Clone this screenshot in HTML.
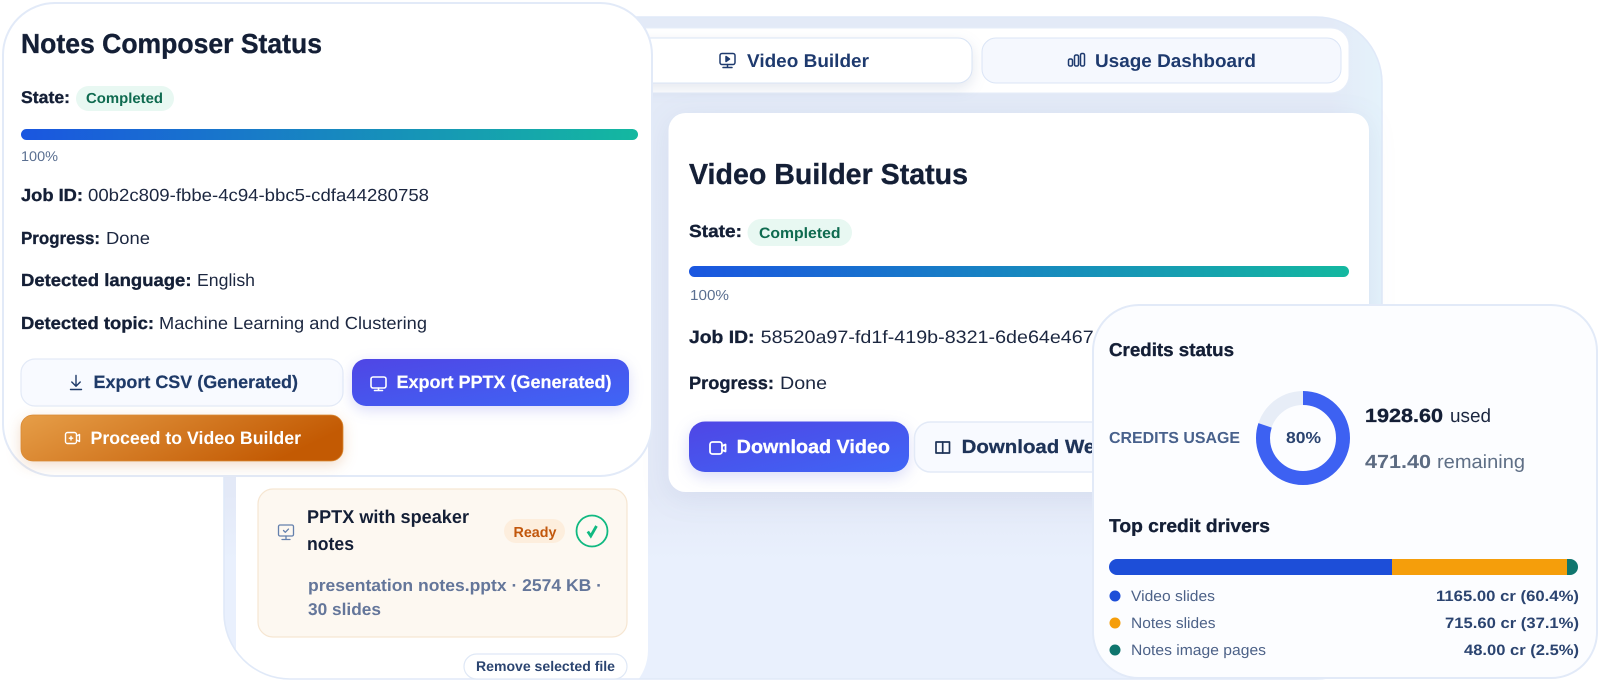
<!DOCTYPE html>
<html lang="en"><head><meta charset="utf-8"><title>Status</title>
<style>
html,body{margin:0;padding:0;background:#fff;width:1600px;height:681px;overflow:hidden}
svg{display:block}
text{font-family:"Liberation Sans",Arial,sans-serif;text-rendering:geometricPrecision;white-space:pre}
.b{font-weight:700}
.dk{fill:#141f36}
.hv{stroke:#141f36;stroke-width:.35}
.i{fill:none;stroke-linecap:round;stroke-linejoin:round}
</style></head><body>
<svg xmlns="http://www.w3.org/2000/svg" width="1600" height="681" viewBox="0 0 1600 681">
<defs>
<linearGradient id="pb" x1="0" x2="1" y1="0" y2="0"><stop offset="0" stop-color="#1a56e0"/><stop offset="1" stop-color="#14b8a0"/></linearGradient>
<linearGradient id="ind" x1="0" x2="1" y1="0" y2="1"><stop offset="0" stop-color="#4f46e5"/><stop offset="1" stop-color="#3f66f6"/></linearGradient>
<linearGradient id="org" x1="0" x2="1" y1="0" y2="0.3"><stop offset="0" stop-color="#e69e48"/><stop offset="1" stop-color="#c35a03"/></linearGradient>
<linearGradient id="pan" x1="0" x2="0" y1="0" y2="1"><stop offset="0" stop-color="#e3eaf7"/><stop offset=".72" stop-color="#e3e9f7"/><stop offset=".82" stop-color="#e9f0fd"/><stop offset="1" stop-color="#e9f0fd"/></linearGradient>
<linearGradient id="tr" x1="0" x2="1" y1="0" y2="0"><stop offset="0" stop-color="#e4f2fb" stop-opacity="0"/><stop offset="1" stop-color="#e4f2fb"/></linearGradient>
<clipPath id="pc"><rect x="224" y="17" width="1158" height="662" rx="66"/></clipPath>
</defs>

<!-- main panel -->
<rect x="224" y="17" width="1158" height="662" rx="66" fill="url(#pan)"/>
<g clip-path="url(#pc)">
<rect x="1330" y="17" width="52" height="330" fill="url(#tr)"/>
<rect x="236" y="60" width="412" height="640" rx="50" fill="#fff"/>
</g>
<rect x="224" y="17" width="1158" height="662" rx="66" fill="none" stroke="#e0e9f8" stroke-width="1.600"/>

<!-- tab strip -->
<rect x="600" y="28" width="749" height="65" rx="18" fill="#fff" stroke="#e6edf9"/>
<rect x="600" y="38" width="372" height="45" rx="14" fill="#fff" stroke="#d9e4f5" style="filter:drop-shadow(0 5px 7px rgba(40,70,130,.13))"/>
<rect x="982" y="38" width="359" height="45" rx="14" fill="#f5f8fe" stroke="#dbe5f6"/>
<g class="i" stroke="#1e3a6e" stroke-width="1.500">
<rect x="720" y="53.500" width="15" height="11" rx="2"/><path d="M727.500 64.500v3M723 67.500h9"/><path d="M726 56.500v5l3.500-2.500z" fill="#1e3a6e"/>
<rect x="1068.500" y="59" width="4" height="7" rx="1.500"/><rect x="1074.500" y="55" width="4" height="11" rx="1.500"/><rect x="1080.500" y="53.500" width="4" height="12.500" rx="1.500"/>
</g>
<text x="747" y="67" font-size="18.500" class="b" fill="#1e3a6e" textLength="122" lengthAdjust="spacingAndGlyphs">Video Builder</text>
<text x="1095" y="67" font-size="18.500" class="b" fill="#1e3a6e" textLength="161" lengthAdjust="spacingAndGlyphs">Usage Dashboard</text>

<!-- video builder card -->
<rect x="668.500" y="113" width="700.500" height="379" rx="17" fill="#fff" style="filter:drop-shadow(0 6px 14px rgba(60,90,150,.08))"/>
<text x="689" y="184" font-size="29" class="b dk hv" textLength="279" lengthAdjust="spacingAndGlyphs">Video Builder Status</text>
<text x="689" y="237" font-size="17.500" class="b dk hv" textLength="53" lengthAdjust="spacingAndGlyphs">State:</text>
<rect x="747.500" y="219" width="104.500" height="27" rx="13.500" fill="#e8f8f2"/>
<text x="759" y="238" font-size="15" class="b" fill="#0f6b50" textLength="81.500" lengthAdjust="spacingAndGlyphs">Completed</text>
<rect x="689" y="266" width="660" height="11" rx="5.500" fill="url(#pb)"/>
<text x="690" y="300" font-size="14.500" fill="#5a6f91" textLength="39" lengthAdjust="spacingAndGlyphs">100%</text>
<text x="689" y="343" font-size="18" class="b dk hv" textLength="65.500" lengthAdjust="spacingAndGlyphs">Job ID:</text>
<text x="760.700" y="343" font-size="18" fill="#1c2740" textLength="333" lengthAdjust="spacingAndGlyphs">58520a97-fd1f-419b-8321-6de64e467</text>
<text x="689" y="389" font-size="18" class="b dk hv" textLength="85" lengthAdjust="spacingAndGlyphs">Progress:</text>
<text x="780" y="389" font-size="18" fill="#1c2740" textLength="47" lengthAdjust="spacingAndGlyphs">Done</text>
<rect x="689" y="421.500" width="220" height="50.500" rx="16" fill="url(#ind)" style="filter:drop-shadow(0 5px 8px rgba(70,80,220,.2))"/>
<g class="i" stroke="#fff" stroke-width="1.800"><rect x="710" y="442" width="12" height="12" rx="2.500"/><path d="M722 446l3.500-1.500v7l-3.500-1.500"/></g>
<text x="736.700" y="453" font-size="19" class="b" fill="#fff" stroke="#fff" stroke-width=".3" textLength="153.300" lengthAdjust="spacingAndGlyphs">Download Video</text>
<rect x="914.500" y="422" width="220" height="50" rx="16" fill="#f8faff" stroke="#e3eaf7" stroke-width="1.500"/>
<g class="i" stroke="#1e3358" stroke-width="1.700"><rect x="936" y="442" width="13.500" height="11"/><path d="M942.700 442v11"/></g>
<text x="961.700" y="453" font-size="19" class="b" fill="#1e3358" stroke="#1e3358" stroke-width=".3" textLength="146" lengthAdjust="spacingAndGlyphs">Download Web</text>

<!-- ready card -->
<rect x="258" y="489" width="369" height="148" rx="15" fill="#fdf8f1" stroke="#f6e6d2" stroke-width="1.200"/>
<g class="i" stroke="#6480ad" stroke-width="1.300"><rect x="278.500" y="525" width="15" height="11" rx="1.500"/><path d="M286 536v3.500M282 539.500h8M283.500 530.500l1.800 1.800 3.200-3.200"/></g>
<text x="307" y="523" font-size="18.500" class="b dk" textLength="162" lengthAdjust="spacingAndGlyphs">PPTX with speaker</text>
<text x="307" y="550" font-size="18.500" class="b dk" textLength="47" lengthAdjust="spacingAndGlyphs">notes</text>
<rect x="504" y="519" width="61" height="24" rx="12" fill="#fdeedd"/>
<text x="513.500" y="537" font-size="14.500" class="b" fill="#c2570c" textLength="43" lengthAdjust="spacingAndGlyphs">Ready</text>
<circle cx="592" cy="531" r="15.500" fill="none" stroke="#10b981" stroke-width="1.800"/>
<path d="M587.800 531.500l3 4.500 5.700-10" fill="none" stroke="#10b981" stroke-width="2.800"/>
<text x="308" y="591" font-size="17" class="b" fill="#64769a" textLength="294" lengthAdjust="spacingAndGlyphs">presentation notes.pptx · 2574 KB ·</text>
<text x="308" y="615" font-size="17" class="b" fill="#64769a" textLength="73" lengthAdjust="spacingAndGlyphs">30 slides</text>
<rect x="464" y="654" width="163" height="25" rx="12.500" fill="#fff" stroke="#dfe8f6" stroke-width="1.200"/>
<text x="476" y="671" font-size="14" class="b" fill="#2b4470" textLength="139" lengthAdjust="spacingAndGlyphs">Remove selected file</text>

<!-- notes card -->
<rect x="3" y="3" width="649" height="473" rx="52" fill="#fff" stroke="#e2eaf8" stroke-width="2"/>
<text x="21" y="53" font-size="27.500" class="b dk hv" textLength="301" lengthAdjust="spacingAndGlyphs">Notes Composer Status</text>
<text x="21" y="103" font-size="17" class="b dk hv" textLength="49" lengthAdjust="spacingAndGlyphs">State:</text>
<rect x="76" y="86" width="98" height="25" rx="12.500" fill="#e8f8f2"/>
<text x="86" y="103" font-size="14.500" class="b" fill="#0f6b50" textLength="77" lengthAdjust="spacingAndGlyphs">Completed</text>
<rect x="21" y="129" width="617" height="11" rx="5.500" fill="url(#pb)"/>
<text x="21" y="161" font-size="14" fill="#5a6f91" textLength="37" lengthAdjust="spacingAndGlyphs">100%</text>
<text x="21" y="201" font-size="17.500" class="b dk hv" textLength="62" lengthAdjust="spacingAndGlyphs">Job ID:</text>
<text x="88" y="201" font-size="17.500" fill="#1c2740" textLength="341" lengthAdjust="spacingAndGlyphs">00b2c809-fbbe-4c94-bbc5-cdfa44280758</text>
<text x="21" y="244" font-size="17.500" class="b dk hv" textLength="79" lengthAdjust="spacingAndGlyphs">Progress:</text>
<text x="106" y="244" font-size="17.500" fill="#1c2740" textLength="44" lengthAdjust="spacingAndGlyphs">Done</text>
<text x="21" y="286" font-size="17.500" class="b dk hv" textLength="170.500" lengthAdjust="spacingAndGlyphs">Detected language:</text>
<text x="197" y="286" font-size="17.500" fill="#1c2740" textLength="58" lengthAdjust="spacingAndGlyphs">English</text>
<text x="21" y="329" font-size="17.500" class="b dk hv" textLength="133" lengthAdjust="spacingAndGlyphs">Detected topic:</text>
<text x="159" y="329" font-size="17.500" fill="#1c2740" textLength="268" lengthAdjust="spacingAndGlyphs">Machine Learning and Clustering</text>

<rect x="21" y="359" width="322" height="47" rx="14" fill="#f8faff" stroke="#e3eaf7" stroke-width="1.200"/>
<path class="i" d="M76 375.500v10.500M71.800 382l4.200 4.200 4.200-4.200M70.500 389.500h11" stroke="#1f3a68" stroke-width="1.400"/>
<text x="93.500" y="388" font-size="18" class="b" fill="#1f3a68" stroke="#1f3a68" stroke-width=".2" textLength="204.500" lengthAdjust="spacingAndGlyphs">Export CSV (Generated)</text>
<rect x="352" y="359" width="277" height="47" rx="14" fill="url(#ind)" style="filter:drop-shadow(0 4px 7px rgba(70,80,220,.2))"/>
<g class="i" stroke="#fff" stroke-width="1.600"><rect x="371" y="377" width="15" height="11" rx="2"/><path d="M378.500 388v2.500M374.500 390.500h8"/></g>
<text x="396.500" y="388" font-size="18" class="b" fill="#fff" stroke="#fff" stroke-width=".2" textLength="215" lengthAdjust="spacingAndGlyphs">Export PPTX (Generated)</text>
<rect x="21" y="415" width="322" height="46" rx="12" fill="url(#org)" stroke="#d98a35" stroke-width=".8" style="filter:drop-shadow(0 4px 7px rgba(195,100,20,.22))"/>
<g class="i" stroke="#fff" stroke-width="1.400"><rect x="65.500" y="432.500" width="11" height="11" rx="2"/><path d="M76.500 436l3-1.500v7l-3-1.500M71 436.500v3.500M69.300 438.200h3.400"/></g>
<text x="90.500" y="444" font-size="18" class="b" fill="#fff" textLength="210.500" lengthAdjust="spacingAndGlyphs">Proceed to Video Builder</text>

<!-- credits card -->
<rect x="1093" y="305" width="504" height="373" rx="46" fill="#fcfdff" stroke="#e2eaf8" stroke-width="2"/>
<text x="1109" y="356" font-size="18.500" class="b dk hv" textLength="125" lengthAdjust="spacingAndGlyphs">Credits status</text>
<text x="1109" y="443" font-size="16" class="b" fill="#48618c" textLength="131" lengthAdjust="spacingAndGlyphs">CREDITS USAGE</text>
<circle cx="1303" cy="438" r="40" fill="none" stroke="#e7edf7" stroke-width="14"/>
<circle cx="1303" cy="438" r="40" fill="none" stroke="#3d61f2" stroke-width="14" stroke-dasharray="201.060 251.330" transform="rotate(-90 1303 438)"/>
<text x="1286" y="443" font-size="16" class="b" fill="#2b4470" textLength="35" lengthAdjust="spacingAndGlyphs">80%</text>
<text x="1365" y="422" font-size="19" class="b dk hv" textLength="78" lengthAdjust="spacingAndGlyphs">1928.60</text>
<text x="1450" y="422" font-size="19" fill="#1c2740" textLength="41" lengthAdjust="spacingAndGlyphs">used</text>
<text x="1365" y="468" font-size="19" class="b" fill="#5c6b82" textLength="66" lengthAdjust="spacingAndGlyphs">471.40</text>
<text x="1437" y="468" font-size="19" fill="#5f6f86" textLength="88" lengthAdjust="spacingAndGlyphs">remaining</text>
<text x="1109" y="532" font-size="18.500" class="b dk hv" textLength="161" lengthAdjust="spacingAndGlyphs">Top credit drivers</text>
<path d="M1117 559H1392V575H1117a8 8 0 0 1 0-16z" fill="#1d4ed8"/>
<rect x="1392" y="559" width="175" height="16" fill="#f59e0b"/>
<path d="M1567 559h3a8 8 0 0 1 0 16h-3z" fill="#0f766e"/>
<circle cx="1115" cy="596" r="5.500" fill="#1d4ed8"/><circle cx="1115" cy="623" r="5.500" fill="#f59e0b"/><circle cx="1115" cy="650" r="5.500" fill="#0f766e"/>
<text x="1131" y="601" font-size="15" fill="#4d6288" textLength="84" lengthAdjust="spacingAndGlyphs">Video slides</text>
<text x="1131" y="628" font-size="15" fill="#4d6288" textLength="84.500" lengthAdjust="spacingAndGlyphs">Notes slides</text>
<text x="1131" y="655" font-size="15" fill="#4d6288" textLength="135" lengthAdjust="spacingAndGlyphs">Notes image pages</text>
<text x="1436" y="601" font-size="15" class="b" fill="#2b4470" textLength="143" lengthAdjust="spacingAndGlyphs">1165.00 cr (60.4%)</text>
<text x="1445" y="628" font-size="15" class="b" fill="#2b4470" textLength="134" lengthAdjust="spacingAndGlyphs">715.60 cr (37.1%)</text>
<text x="1464" y="655" font-size="15" class="b" fill="#2b4470" textLength="115" lengthAdjust="spacingAndGlyphs">48.00 cr (2.5%)</text>
</svg>
</body></html>
